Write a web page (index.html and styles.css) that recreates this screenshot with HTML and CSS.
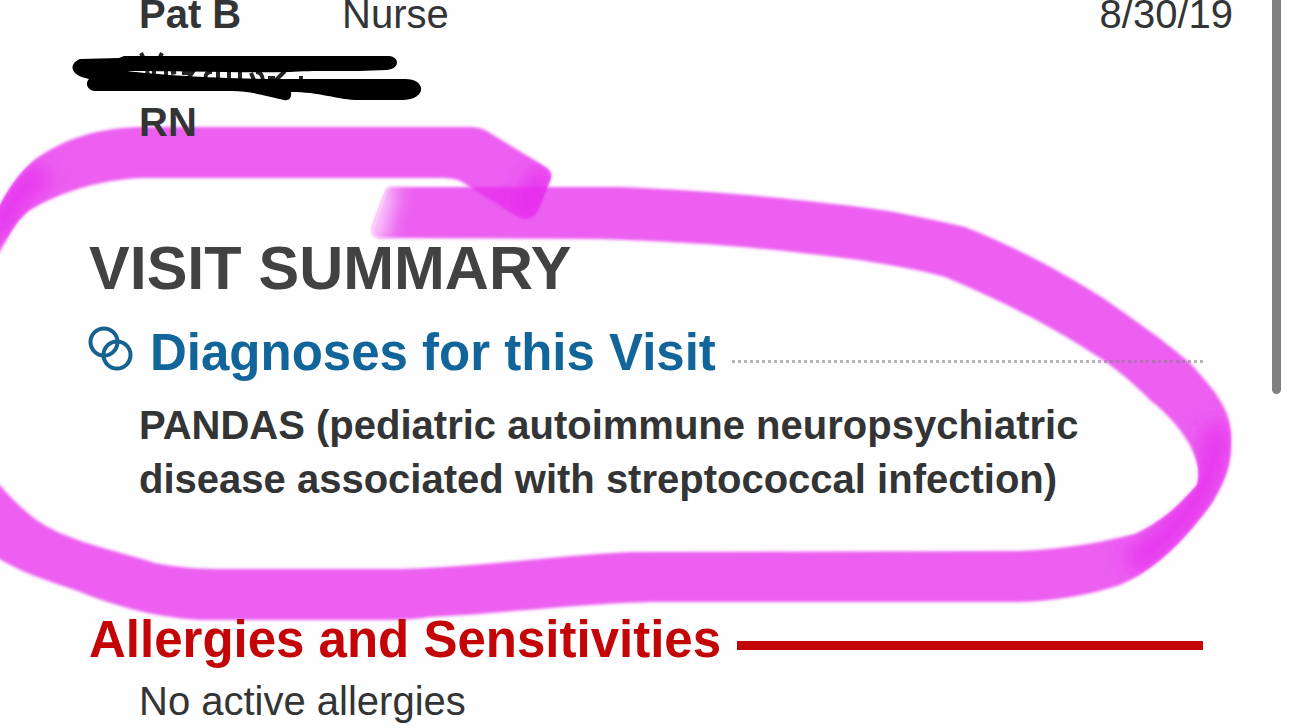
FILE: index.html
```html
<!DOCTYPE html>
<html lang="en">
<head>
<meta charset="utf-8">
<meta name="viewport" content="width=device-width, initial-scale=1">
<title>Visit Summary</title>
<link rel="stylesheet" href="styles.css">
</head>
<body>
<div class="viewer">
  <!-- Highlighter, under the text -->
  <svg class="ink ink-highlight" viewBox="0 0 1290 728" aria-hidden="true">
    <defs>
      <filter id="edge" x="-5%" y="-5%" width="110%" height="110%"><feGaussianBlur stdDeviation="1.4"/></filter>
      <filter id="soft" filterUnits="userSpaceOnUse" x="-80" y="0" width="1400" height="728"><feGaussianBlur stdDeviation="10"/></filter>
      <path id="loop" d="M393 187 L620 187 C700 190 790 198 860 207 C900 212 930 219 965 227 C1020 249 1060 271 1103 298 C1140 324 1165 341 1190 363 C1212 388 1229 405 1231 433 C1232 460 1229 475 1212 503 C1190 533 1160 568 1120 585 C1090 595 1050 602 1015 602 L650 602 C560 605 500 614 430 617 C410 620 395 620 380 620 L200 620 C150 617 110 604 75 590 C45 580 20 572 -4 557 L-4 481 C20 508 35 522 60 533 C90 546 120 552 155 563 C180 568 200 569 230 569 L400 569 C480 567 550 556 630 552 L1020 551 C1070 549 1105 541 1135 534 C1165 520 1182 502 1197 485 Q1202 468 1190 445 C1178 425 1165 412 1150 400 C1130 380 1115 368 1100 358 C1050 325 1000 300 945 277 C920 270 890 265 860 260 C780 250 720 243 600 239 L380 238 C372 236 371 232 373 226 L386 191 Q388 187 393 187Z"/>
      <path id="tail" d="M-4 213 C8 188 22 168 40 156 C70 136 105 127 145 127 L470 127 C478 127 484 129 490 133 L544 166 C551 170 553 175 550 181 L538 210 C534 219 526 221 518 217 L462 182 C457 179 450 178 440 178 L140 178 C100 180 60 192 30 210 C15 221 8 238 -4 258Z"/>
      <clipPath id="in-loop"><use href="#loop"/></clipPath>
      <clipPath id="in-tail"><use href="#tail"/></clipPath>
    </defs>
    <use class="marker" href="#loop" filter="url(#edge)"/>
    <g clip-path="url(#in-loop)">
      <path class="marker-fade" d="M382 180 L368 245" filter="url(#soft)"/>
      <path class="marker-dense" d="M1216 425 C1220 470 1195 520 1130 566" filter="url(#soft)"/>
    </g>
    <use class="marker" href="#tail" filter="url(#edge)"/>
    <g clip-path="url(#in-tail)">
      <path class="marker-dense" d="M-6 236 C8 210 20 185 45 172" filter="url(#soft)"/>
      <path class="marker-dense" d="M546 170 L524 214" filter="url(#soft)"/>
    </g>
  </svg>

  <main class="sheet">
    <table class="care-team">
      <tbody>
        <tr>
          <th scope="row">Pat B<span class="redacted"></span>RN</th>
          <td>Nurse</td>
          <td class="date">8/30/19</td>
        </tr>
      </tbody>
    </table>

    <h1 class="title">VISIT SUMMARY</h1>

    <section class="section section-diagnoses">
      <h2 class="heading">
        <svg class="rings" viewBox="0 0 46 46" aria-hidden="true"><circle cx="16" cy="16" r="13.500"/><circle cx="29" cy="29" r="13.500"/></svg>
        <span>Diagnoses for this Visit</span>
        <span class="rule rule-dotted"></span>
      </h2>
      <p class="entry entry-strong">PANDAS (pediatric autoimmune neuropsychiatric<br>disease associated with streptococcal infection)</p>
    </section>

    <section class="section section-allergies">
      <h2 class="heading">
        <span>Allergies and Sensitivities</span>
        <span class="rule rule-solid"></span>
      </h2>
      <p class="entry">No active allergies</p>
    </section>
  </main>

  <!-- Black pen, over the text -->
  <svg class="ink" viewBox="0 0 1290 728" aria-hidden="true">
    <path class="specks" d="M141 53l3 6M162 53l-3 6M147 71l2 9M154 71v9M166 71v9M171 73l5-1M182 73h10l-5 7M206 80q-2-8 6-8M218 71v9M229 71v9M240 71v9M251 73l3 7M263 80q-1-8-7-8M268 78h7M276 80l9-9M301 76v5"/>
    <path d="M80 59 L119 58 L124 56 L389 56 C400 57 400 69 387 70 C350 72 310 70 290 72 C240 73 180 71 127 71 C160 75 220 79 285 79 L405 79 C427 79 427 100 402 100 L355 100 C335 99 320 92 291 92 C292 99 288 101 284 100 C270 97 252 91 232 91 L94 91 C87 90 85 83 89 79 C70 76 68 64 80 59Z"/>
  </svg>
  <div class="scroll-thumb"></div>
</div>
</body>
</html>
```
FILE: styles.css
```css
* { box-sizing: border-box; }

body {
  margin: 0;
  background: #fefefe;
  color: #333435;
  font: 40px/54px "Liberation Sans", Arial, Helvetica, sans-serif;
}

.viewer {
  position: relative;
  min-height: 100vh;
  overflow: hidden;
}

.sheet {
  position: relative;
  margin-top: -13px;
  padding: 0 57px 0 89px;
}

.care-team {
  width: 100%;
  padding-left: 50px;
  border-spacing: 0;
}

.care-team th,
.care-team td {
  padding: 0;
  text-align: left;
  vertical-align: top;
}

.care-team th { width: 203px; }
.care-team .date { text-align: right; }

.redacted {
  display: block;
  height: 54px;
}

.title {
  margin: 84px 0 20px;
  color: #424243;
  font-size: 61px;
  line-height: 70px;
}

.section { margin-right: 30px; }
.section-allergies { margin-top: 104px; }

.heading {
  display: flex;
  align-items: center;
  gap: 16px;
  margin: 0;
  font-size: 51px;
  line-height: 60px;
}

.section-diagnoses .heading {
  margin-bottom: 15px;
  color: #12659a;
}

.section-allergies .heading {
  margin-bottom: 4px;
  color: #c30508;
}

.rings {
  width: 46px;
  height: 46px;
  margin: 0 0 8px -1px;
  fill: none;
  stroke: #17628f;
  stroke-width: 4px;
}

.rule { flex: 1; }

.rule-dotted {
  height: 3px;
  margin-top: 16px;
  background: repeating-linear-gradient(to right, #85858599 0 3px, transparent 3px 6px);
}

.rule-solid {
  height: 9px;
  margin-top: 11px;
  background: #c30508;
}

.entry {
  margin: 0;
  padding-left: 50px;
}

.entry-strong { font-weight: bold; }

.ink {
  position: absolute;
  top: 0;
  left: 0;
  width: 1290px;
  height: 728px;
  pointer-events: none;
}

.marker {
  fill: #e62ded;
  fill-opacity: 0.76;
}

.marker-dense,
.marker-fade {
  fill: none;
  stroke: #e62ded;
  stroke-width: 26px;
  stroke-opacity: 0.8;
}

.marker-fade {
  stroke: #ffffff;
  stroke-width: 30px;
  stroke-opacity: 0.7;
}

.specks {
  fill: none;
  stroke: #242424;
  stroke-width: 4px;
}

.scroll-thumb {
  position: absolute;
  top: -8px;
  right: 9px;
  width: 9px;
  height: 402px;
  border-radius: 5px;
  background: #808080;
}
```
